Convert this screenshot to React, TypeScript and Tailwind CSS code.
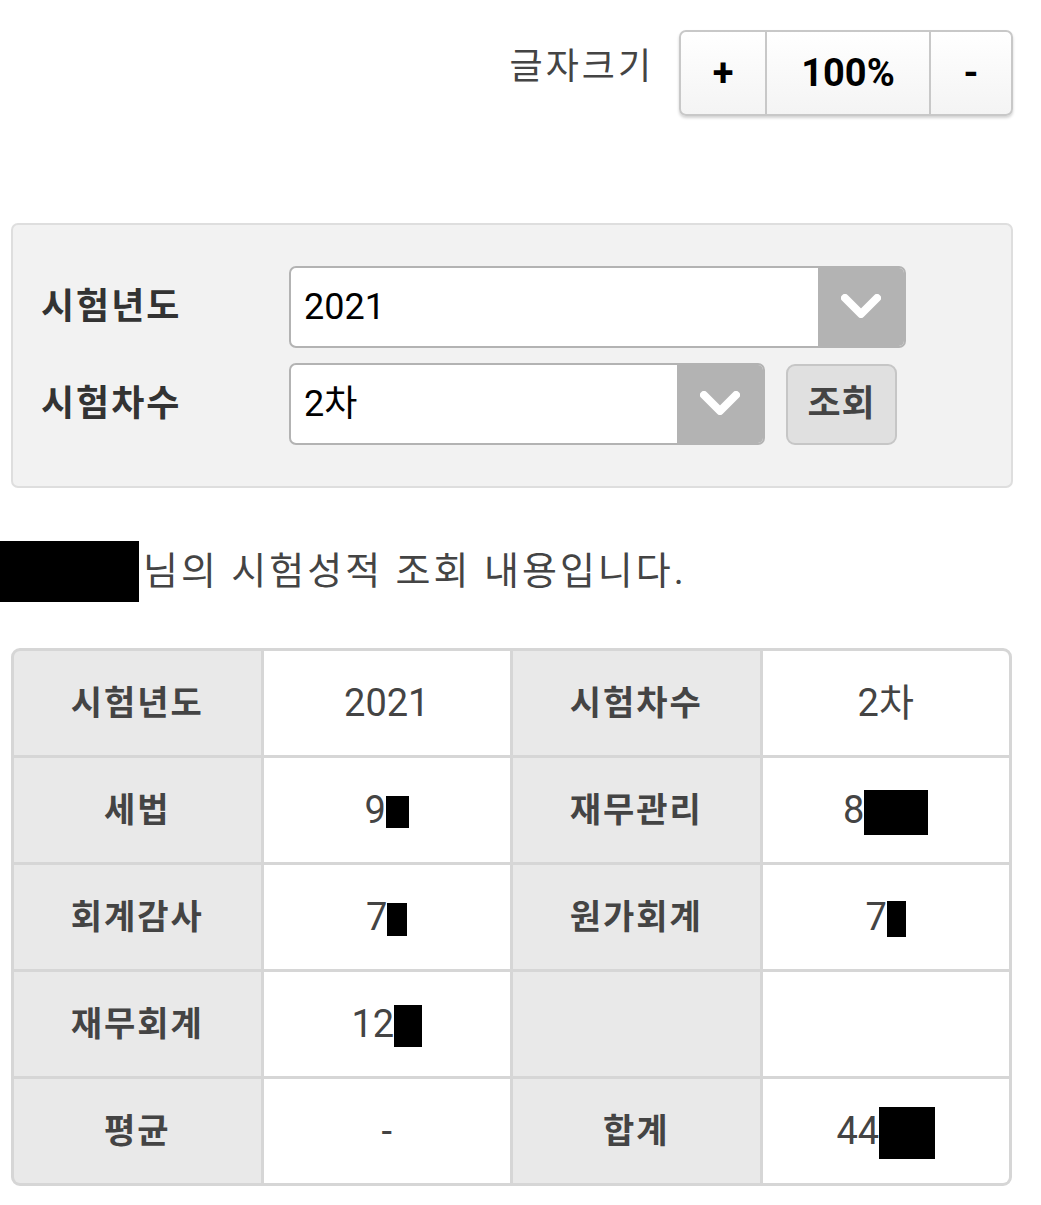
import React from 'react';

const font = { fontFamily: "Roboto, 'Noto Sans CJK KR', sans-serif" };

function Redact({ w, h }: { w: number; h: number }) {
  return <span className="inline-block bg-black align-middle" style={{ width: w, height: h }} />;
}

function Chevron() {
  return (
    <svg width="44" height="30" viewBox="0 0 44 30" className="blur-[0.6px]">
      <polyline points="6,6 22,22 38,6" fill="none" stroke="white" strokeWidth="8" strokeLinejoin="round" strokeLinecap="round" />
    </svg>
  );
}

function Select({ value, width }: { value: string; width: string }) {
  return (
    <div className={`flex h-[82px] ${width} overflow-hidden rounded-[7px] border-2 border-[#b3b3b3] bg-white`}>
      <div className="flex flex-1 items-center pl-[13px] text-[36px] text-black">{value}</div>
      <div className="flex w-[86px] items-center justify-center bg-[#b3b3b3]">
        <Chevron />
      </div>
    </div>
  );
}

type Cell = { label: string; value: React.ReactNode };

const rows: [Cell, Cell][] = [
  [{ label: '시험년도', value: '2021' }, { label: '시험차수', value: '2차' }],
  [
    { label: '세법', value: <>9<Redact w={23} h={32} /></> },
    { label: '재무관리', value: <>8<Redact w={64} h={45} /></> },
  ],
  [
    { label: '회계감사', value: <>7<Redact w={20} h={33} /></> },
    { label: '원가회계', value: <>7<Redact w={19} h={36} /></> },
  ],
  [{ label: '재무회계', value: <>12<Redact w={28} h={42} /></> }, { label: '', value: '' }],
  [{ label: '평균', value: '-' }, { label: '합계', value: <>44<Redact w={56} h={52} /></> }],
];

export default function App() {
  return (
    <div className="min-h-[1205px] bg-white" style={font}>
      {/* font size control */}
      <div className="flex items-center justify-end gap-[25px] pr-[28px] pt-[30px]">
        <span className="pb-[12px] text-[36px] tracking-[3px] text-[#444]">글자크기</span>
        <div className="flex h-[86px] overflow-hidden rounded-[7px] border-2 border-[#c8c8c8] bg-gradient-to-b from-white to-[#f4f4f4] text-[38px] font-bold text-black shadow-[0_2px_3px_rgba(0,0,0,0.18)]">
          <button className="w-[86px] border-r-2 border-[#c8c8c8]">+</button>
          <button className="w-[164px] border-r-2 border-[#c8c8c8]">100%</button>
          <button className="w-[80px]">-</button>
        </div>
      </div>

      {/* search box */}
      <div className="mx-[11px] mr-[28px] mt-[107px] flex flex-col gap-[15px] rounded-[7px] border-2 border-[#dedede] bg-[#f2f2f2] py-[41px] pl-[28px]">
        <div className="flex items-center">
          <span className="w-[248px] text-[36px] font-bold tracking-[2px] text-[#333]">시험년도</span>
          <Select value="2021" width="w-[617px]" />
        </div>
        <div className="flex items-center">
          <span className="w-[248px] text-[36px] font-bold tracking-[2px] text-[#333]">시험차수</span>
          <Select value="2차" width="w-[476px]" />
          <button className="ml-[21px] h-[81px] w-[111px] rounded-[9px] border-2 border-[#c6c6c6] bg-[#e0e0e0] text-[36px] font-bold tracking-[1px] text-[#444]">
            조회
          </button>
        </div>
      </div>

      {/* message */}
      <div className="mt-[53px] flex items-center">
        <span className="inline-block h-[61px] w-[139px] bg-black" />
        <span className="ml-[4px] text-[38px] tracking-[3px] text-[#444]">님의 시험성적 조회 내용입니다.</span>
      </div>

      {/* result table */}
      <div className="ml-[11px] mr-[29px] mt-[46px] grid grid-cols-4 gap-[3px] overflow-hidden rounded-[9px] border-[3px] border-[#d6d6d6] bg-[#d6d6d6]">
        {rows.map((pair, i) =>
          pair.map((c, j) => (
            <React.Fragment key={`${i}-${j}`}>
              <div className="flex h-[104px] items-center justify-center bg-[#e9e9e9] text-[34px] font-bold tracking-[2px] text-[#444]">
                {c.label}
              </div>
              <div className="flex h-[104px] items-center justify-center bg-white text-[38px] text-[#444]">
                <span>{c.value}</span>
              </div>
            </React.Fragment>
          ))
        )}
      </div>
    </div>
  );
}
